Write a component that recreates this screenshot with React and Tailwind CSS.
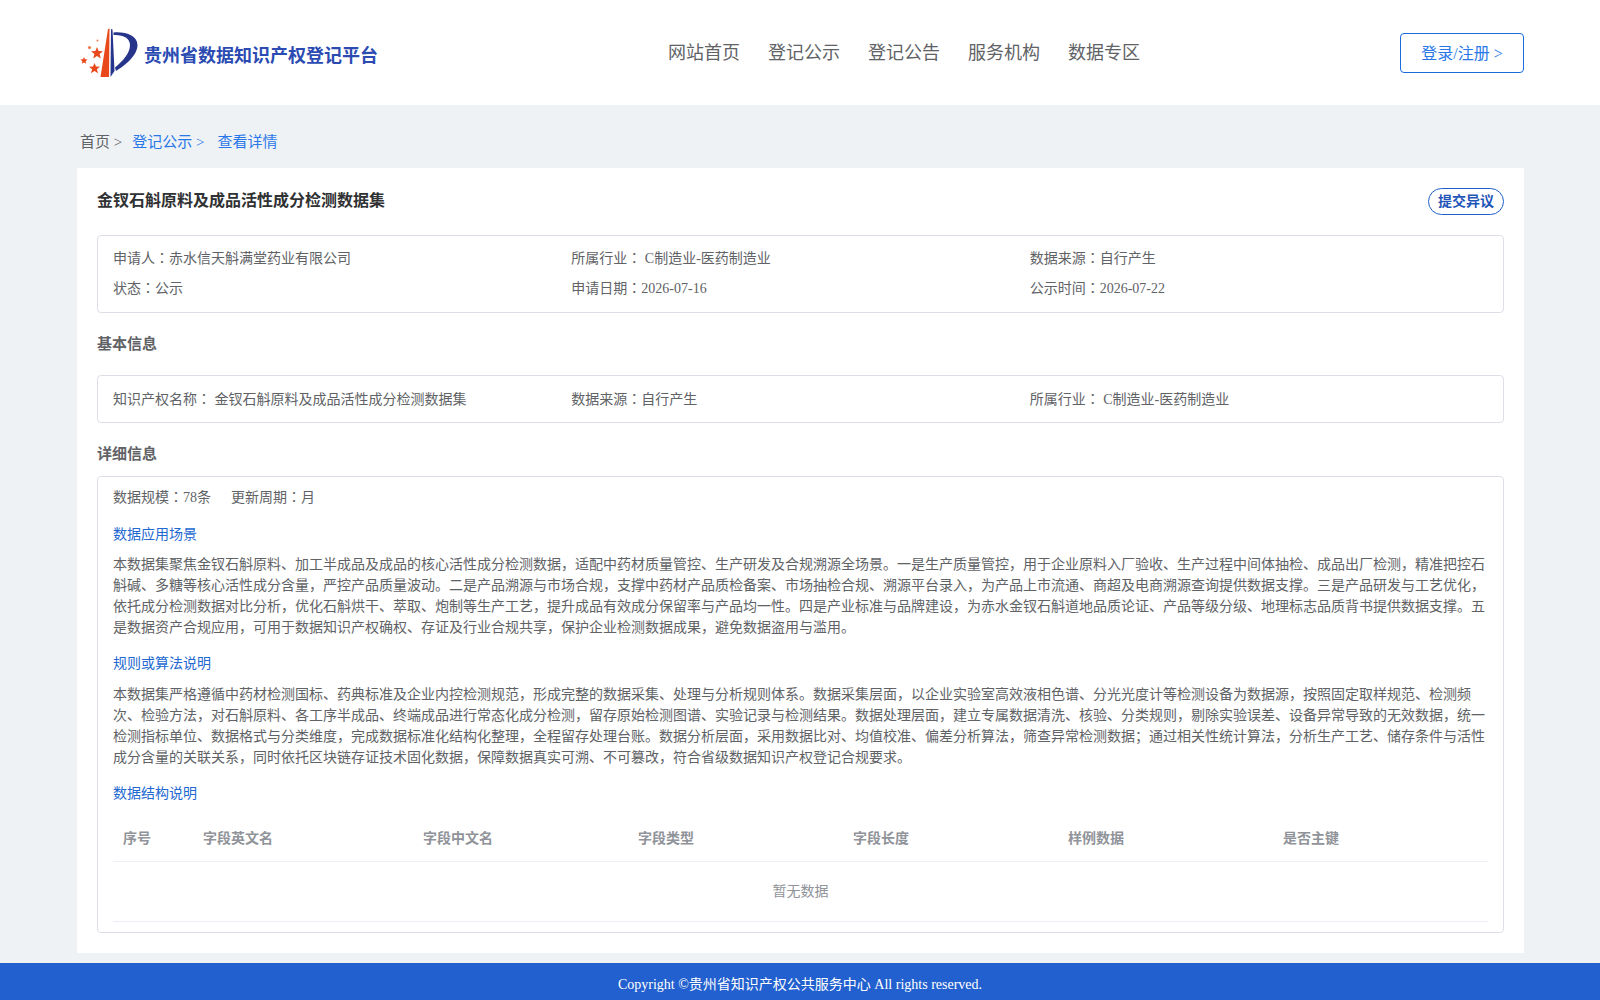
import React from "react";

function Logo() {
  return (
    <svg width="60" height="52" viewBox="0 0 60 52" className="shrink-0">
      <path d="M28 1 L29.5 0.5 L29 49 L20.5 49 Z" fill="#e8481a" />
      <path d="M31 1 L32.5 1.5 L34.5 43 L30.5 49 Z" fill="#27348b" />
      <path d="M33.5 4.5 C46 3.5 57.5 8 57.5 17 C57.5 27 46 37 36 43 L35 39.5 C43 33 50 25 50 17 C50 10 43 6.5 33.5 7 Z" fill="#27348b" />
      <polygon points="17,19 18.6,23 23,23.2 19.6,26 20.8,30.4 17,28 13.2,30.4 14.4,26 11,23.2 15.4,23" fill="#e8481a" />
      <polygon points="14.5,35 16,38.6 20,38.8 16.9,41.3 18,45.2 14.5,43 11,45.2 12.1,41.3 9,38.8 13,38.6" fill="#e8481a" />
      <polygon points="4,29 5,31.3 7.6,31.5 5.6,33.2 6.2,35.8 4,34.4 1.8,35.8 2.4,33.2 0.4,31.5 3,31.3" fill="#e8481a" />
      <circle cx="9.5" cy="19.5" r="1.6" fill="#ee7a50" />
      <circle cx="17.5" cy="12.5" r="1" fill="#ee7a50" />
    </svg>
  );
}

function Section({ children }) {
  return <div className="text-[14px] leading-[21px] text-[#2268d1]">{children}</div>;
}

function Field({ label, value }) {
  return (
    <span>
      {label}
      <span className="font-['Noto_Sans_CJK_TC']">：</span>
      {value}
    </span>
  );
}

const columns = [
  ["序号", "w-[80px]"],
  ["字段英文名", "w-[220px]"],
  ["字段中文名", "w-[215px]"],
  ["字段类型", "w-[215px]"],
  ["字段长度", "w-[215px]"],
  ["样例数据", "w-[215px]"],
  ["是否主键", "w-[215px]"],
];

export default function App() {
  return (
    <div
      className="h-screen overflow-hidden bg-[#eff2f5] text-[14px] text-[#606266]"
      style={{ fontFamily: '"Liberation Serif", "Noto Sans CJK SC", serif' }}
    >
      <header className="h-[105px] bg-white px-[76px] flex items-start">
        <div className="w-[592px] flex items-center pt-[28px] pl-[4px]">
          <Logo />
          <span className="ml-[4px] mt-[4px] text-[18px] font-bold text-[#2b4bb3]">贵州省数据知识产权登记平台</span>
        </div>
        <nav className="flex gap-[28px] pt-[40px] text-[18px] leading-[27px] text-[#606266]">
          <span>网站首页</span>
          <span>登记公示</span>
          <span>登记公告</span>
          <span>服务机构</span>
          <span>数据专区</span>
        </nav>
        <div className="ml-auto pt-[33px]">
          <div className="w-[124px] h-[40px] flex items-center justify-center rounded-[4px] border border-[#1a6ae0] pt-[1px] text-[16px] text-[#2a78e8]">
            登录/注册 &gt;
          </div>
        </div>
      </header>

      <div className="px-[76px]">
        <div className="flex h-[63px] items-center pl-[4px] pt-[12px] text-[15px]">
          <span className="text-[#606266]">首页 &gt;</span>
          <span className="ml-[10px] text-[#2a78e8]">登记公示 &gt;</span>
          <span className="ml-[13px] text-[#2a78e8]">查看详情</span>
        </div>

        <main className="ml-[1px] bg-white px-[20px] h-[785px]">
          <div className="flex items-start justify-between pt-[20px] h-[67px]">
            <h1 className="text-[16px] leading-[26px] font-bold text-[#303133]">金钗石斛原料及成品活性成分检测数据集</h1>
            <div className="w-[76px] h-[27px] flex items-center justify-center rounded-[14px] border border-[#1f5fcc] text-[14px] font-bold text-[#1f55b8]">
              提交异议
            </div>
          </div>

          <div className="grid h-[78px] grid-cols-3 content-center gap-y-[8px] rounded-[4px] border border-[#dcdfe6] px-[15px] pb-[2px] leading-[21px]">
            <Field label="申请人" value="赤水信天斛满堂药业有限公司" />
            <Field label="所属行业" value=" C制造业-医药制造业" />
            <Field label="数据来源" value="自行产生" />
            <Field label="状态" value="公示" />
            <Field label="申请日期" value="2026-07-16" />
            <Field label="公示时间" value="2026-07-22" />
          </div>

          <h2 className="mt-[21px] text-[15px] leading-[21px] font-bold text-[#606266]">基本信息</h2>

          <div className="mt-[20px] grid h-[48px] grid-cols-3 items-center rounded-[4px] border border-[#dcdfe6] px-[15px] pb-[1px] leading-[21px]">
            <Field label="知识产权名称" value=" 金钗石斛原料及成品活性成分检测数据集" />
            <Field label="数据来源" value="自行产生" />
            <Field label="所属行业" value=" C制造业-医药制造业" />
          </div>

          <h2 className="mt-[21px] text-[15px] leading-[21px] font-bold text-[#606266]">详细信息</h2>

          <div className="mt-[11px] rounded-[4px] border border-[#dcdfe6] px-[15px] pt-[9px] h-[457px] leading-[21px]">
            <div className="flex gap-[20px]">
              <Field label="数据规模" value="78条" />
              <Field label="更新周期" value="月" />
            </div>
            <div className="mt-[16px]"><Section>数据应用场景</Section></div>
            <p className="mt-[9px]">
              本数据集聚焦金钗石斛原料、加工半成品及成品的核心活性成分检测数据，适配中药材质量管控、生产研发及合规溯源全场景。一是生产质量管控，用于企业原料入厂验收、生产过程中间体抽检、成品出厂检测，精准把控石斛碱、多糖等核心活性成分含量，严控产品质量波动。二是产品溯源与市场合规，支撑中药材产品质检备案、市场抽检合规、溯源平台录入，为产品上市流通、商超及电商溯源查询提供数据支撑。三是产品研发与工艺优化，依托成分检测数据对比分析，优化石斛烘干、萃取、炮制等生产工艺，提升成品有效成分保留率与产品均一性。四是产业标准与品牌建设，为赤水金钗石斛道地品质论证、产品等级分级、地理标志品质背书提供数据支撑。五是数据资产合规应用，可用于数据知识产权确权、存证及行业合规共享，保护企业检测数据成果，避免数据盗用与滥用。
            </p>
            <div className="mt-[15px]"><Section>规则或算法说明</Section></div>
            <p className="mt-[10px]">
              本数据集严格遵循中药材检测国标、药典标准及企业内控检测规范，形成完整的数据采集、处理与分析规则体系。数据采集层面，以企业实验室高效液相色谱、分光光度计等检测设备为数据源，按照固定取样规范、检测频次、检验方法，对石斛原料、各工序半成品、终端成品进行常态化成分检测，留存原始检测图谱、实验记录与检测结果。数据处理层面，建立专属数据清洗、核验、分类规则，剔除实验误差、设备异常导致的无效数据，统一检测指标单位、数据格式与分类维度，完成数据标准化结构化整理，全程留存处理台账。数据分析层面，采用数据比对、均值校准、偏差分析算法，筛查异常检测数据；通过相关性统计算法，分析生产工艺、储存条件与活性成分含量的关联关系，同时依托区块链存证技术固化数据，保障数据真实可溯、不可篡改，符合省级数据知识产权登记合规要求。
            </p>
            <div className="mt-[15px]"><Section>数据结构说明</Section></div>

            <div className="mt-[11px] flex h-[47px] items-center border-b border-[#ebeef5] font-bold text-[#909399]">
              {columns.map(([label, width]) => (
                <div key={label} className={`${width} shrink-0 px-[10px]`}>{label}</div>
              ))}
            </div>
            <div className="flex h-[60px] items-center justify-center border-b border-[#ebeef5] text-[#909399]">暂无数据</div>
          </div>
        </main>

        <div className="h-[10px]" />
      </div>

      <footer className="h-[42px] flex items-center justify-center bg-[#2260cf] text-[14px] text-white">
        Copyright ©贵州省知识产权公共服务中心 All rights reserved.
      </footer>
    </div>
  );
}
